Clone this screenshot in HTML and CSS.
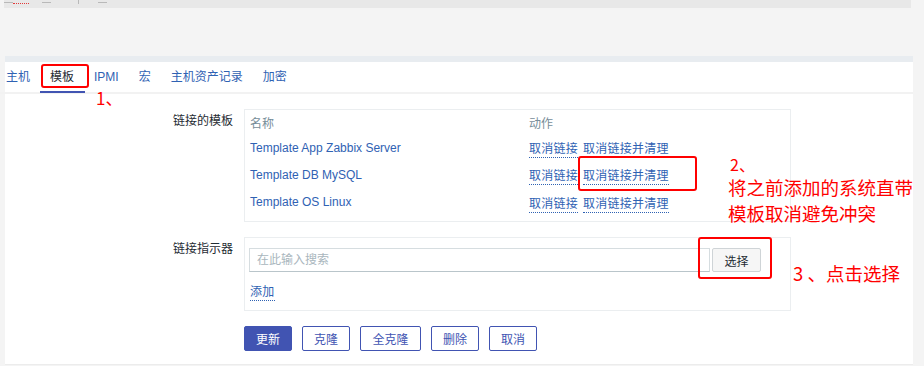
FILE: index.html
```html
<html>
  <head>
    <link rel="stylesheet" href="styles.css">
  </head>
  <body>
    <div class="topbar">
      <span class="dash" style="width:9px"></span>
      <span class="squiggle"></span>
      <span class="dash gap1" style="width:9px"></span>
      <span class="tick"></span>
      <span class="dash gap2" style="width:9px"></span>
    </div>

    <div class="panel">
      <ul class="tabs">
        <li><a>主机</a></li>
        <li class="active"><a>模板</a></li>
        <li><a>IPMI</a></li>
        <li><a>宏</a></li>
        <li><a>主机资产记录</a></li>
        <li><a>加密</a></li>
      </ul>

      <div class="form">
        <div class="row">
          <label class="lbl">链接的模板</label>
          <div class="box linked">
            <table>
              <tr class="head"><th class="name">名称</th><th>动作</th></tr>
              <tr class="r1"><td class="name"><a class="link">Template App Zabbix Server</a></td>
                <td><a class="action">取消链接</a><a class="action next">取消链接并清理</a></td></tr>
              <tr class="r2"><td class="name"><a class="link">Template DB MySQL</a></td>
                <td><a class="action">取消链接</a><a class="action next">取消链接并清理</a></td></tr>
              <tr class="r3"><td class="name"><a class="link">Template OS Linux</a></td>
                <td><a class="action">取消链接</a><a class="action next">取消链接并清理</a></td></tr>
            </table>
          </div>
        </div>

        <div class="row">
          <label class="lbl">链接指示器</label>
          <div class="box indicator">
            <div class="search">
              <input type="text" placeholder="在此输入搜索">
              <button class="select">选择</button>
            </div>
            <div class="add"><a class="action">添加</a></div>
          </div>
        </div>

        <div class="row">
          <span></span>
          <div class="buttons">
            <button class="btn primary">更新</button>
            <button class="btn">克隆</button>
            <button class="btn wide">全克隆</button>
            <button class="btn">删除</button>
            <button class="btn">取消</button>
          </div>
        </div>
      </div>

      <!-- red annotations drawn over the screenshot -->
      <div class="mark mark1"></div>
      <div class="note note1">1、</div>
      <div class="mark mark2"></div>
      <div class="note note2"><span class="num">2、</span><br>将之前添加的系统直带<br>模板取消避免冲突</div>
      <div class="mark mark3"></div>
      <div class="note note3">3 、点击选择</div>
    </div>
  </body>
</html>
```

FILE: styles.css
```css
body {
    margin: 0;
    background-color: #f4f4f4;
    font-family: "Liberation Sans", "Noto Sans CJK SC", sans-serif;
    font-size: 12px;
    color: #1f2c33;
}

.topbar {
    margin-left: 4px;
    width: 907px;
    height: 8px;
    background-color: #e8e8e8;
    display: flex;
    align-items: flex-start;
    padding-top: 2px;
    box-sizing: border-box;
}

.dash {
    display: block;
    height: 1px;
    background-color: #b9b9b9;
}

.squiggle {
    display: block;
    width: 16px;
    height: 1px;
    border-bottom: 1px dotted #e23a3a;
}

.gap1 { margin-left: 13px; }
.gap2 { margin-left: 19px; }

.tick {
    display: block;
    width: 1px;
    height: 4px;
    margin-left: 27px;
    margin-top: -2px;
    background-color: #b9b9b9;
}

.panel {
    position: relative;
    margin: 48px 0 0 5px;
    width: 908px;
    height: 309px;
    border-top: 6px solid #e8ecf0;
    border-bottom: 1px solid #ececec;
    background-color: #fff;
    box-sizing: border-box;
}

.tabs {
    list-style: none;
    margin: 0;
    padding: 0;
    display: flex;
    height: 30px;
    border-bottom: 2px solid #f2f2f2;
    margin-left: -9px;
}

.tabs li {
    position: relative;
    padding: 0 10px;
    line-height: 30px;
}

.tabs a {
    color: #2f62b3;
}

.tabs .active a {
    color: #1f2c33;
}

.tabs .active::after {
    content: "";
    position: absolute;
    left: 0;
    right: -1px;
    bottom: -1px;
    height: 2px;
    background-color: #4154b2;
}

.form {
    padding-top: 15px;
}

.row {
    display: grid;
    grid-template-columns: 228px 547px;
    column-gap: 11px;
    margin-bottom: 15px;
}

.lbl {
    text-align: right;
    padding-top: 4px;
    line-height: 16px;
}

.box {
    border: 1px solid #ebeef0;
}

.linked {
    padding: 0 5px 5px 5px;
}

table {
    border-collapse: collapse;
    width: 100%;
    font-size: 12px;
    color: #1f2c33;
}

th {
    text-align: left;
    font-weight: normal;
    color: #768d99;
    height: 24px;
    padding: 0;
}

td {
    padding: 0;
}

th.name, td.name {
    width: 279px;
}

.r1 td, .r2 td { height: 27px; }
.r3 td { height: 28px; }

.link {
    color: #2f62b3;
}

.action {
    color: #2f62b3;
    border-bottom: 1px dotted #2f62b3;
    padding-bottom: 1px;
    letter-spacing: 0.25px;
}

.action.next {
    margin-left: 5px;
}

.indicator {
    padding: 10px 4px 10px 4px;
}

.search {
    display: flex;
    gap: 2px;
}

.search input {
    width: 461px;
    height: 24px;
    box-sizing: border-box;
    border: 1px solid #d6dde0;
    border-bottom-color: #b9c5ca;
    padding: 0 7px;
    font-family: "Liberation Sans", "Noto Sans CJK SC", sans-serif;
    font-size: 12px;
    outline: none;
}

.search input::placeholder {
    color: #a9b6bd;
}

.select {
    width: 49px;
    height: 24px;
    background-color: #f6f6f6;
    border: 1px solid #cfd4d7;
    border-radius: 2px;
    color: #1f2c33;
    font-family: "Liberation Sans", "Noto Sans CJK SC", sans-serif;
    font-size: 12px;
    padding: 0;
}

.add {
    margin-top: 12px;
    line-height: 16px;
    padding-left: 1px;
}

.buttons {
    display: flex;
    gap: 10px;
}

.btn {
    width: 48px;
    height: 25px;
    padding: 0;
    background-color: #fff;
    border: 1px solid #4154b2;
    border-radius: 2px;
    color: #4154b2;
    font-family: "Liberation Sans", "Noto Sans CJK SC", sans-serif;
    font-size: 12px;
}

.btn.wide {
    width: 61px;
}

.btn.primary {
    background-color: #4154b2;
    color: #fff;
}

.mark {
    position: absolute;
    border: 2px solid #f00;
    border-radius: 3px;
    box-sizing: border-box;
}

.mark1 { left: 36px; top: 2px; width: 48px; height: 24px; }
.mark2 { left: 573px; top: 94px; width: 119px; height: 35px; }
.mark3 { left: 693px; top: 175px; width: 74px; height: 42px; }

.note {
    position: absolute;
    color: #f00;
    font-family: "Noto Sans CJK SC", sans-serif;
    white-space: nowrap;
}

.note1 { left: 91px; top: 26px; font-size: 17px; line-height: 20px; }
.note2 { left: 723px; top: 92px; font-size: 18.5px; line-height: 26px; }
.note2::first-line { font-size: 16px; line-height: 20px; }
.note2 .num { padding-left: 2px; }
.note3 { left: 788px; top: 199px; font-size: 18.5px; line-height: 24px; }
```
